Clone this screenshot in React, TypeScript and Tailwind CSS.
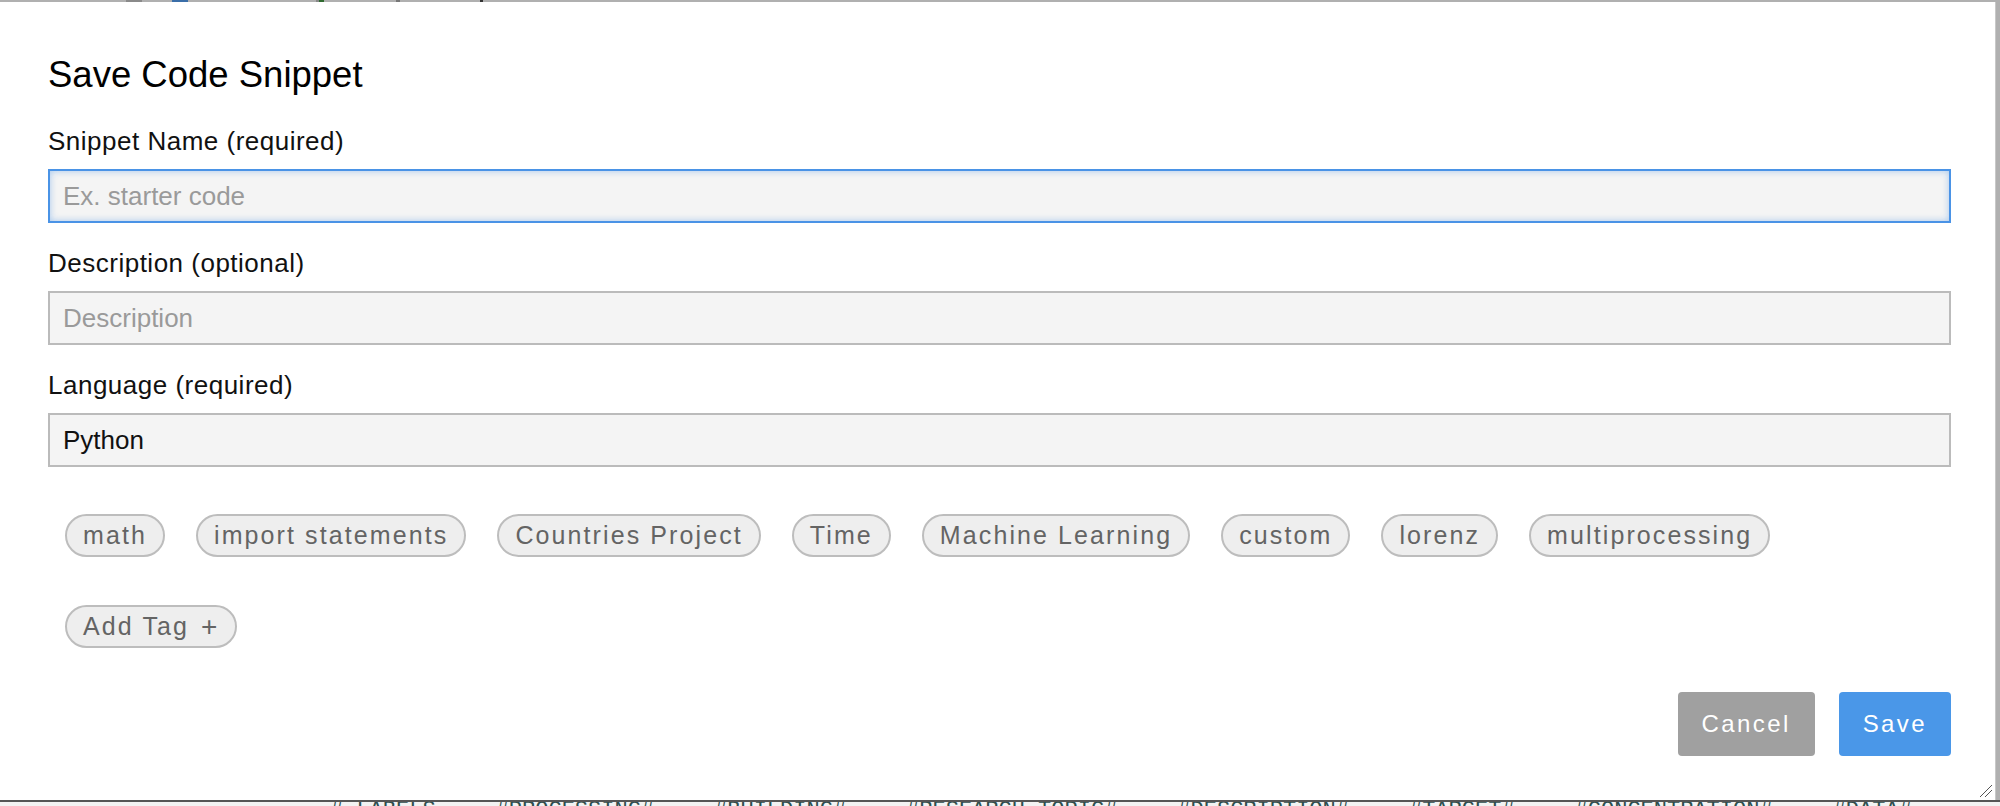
import React from "react";

const tags = [
  "math",
  "import statements",
  "Countries Project",
  "Time",
  "Machine Learning",
  "custom",
  "lorenz",
  "multiprocessing",
];

function Pill({ children }: { children: React.ReactNode }) {
  return (
    <div className="flex h-[43px] items-center rounded-full border-2 border-[#bdbdbd] bg-[#eeeeee] px-4 text-[25px] leading-none tracking-[2.1px] text-[#646464] whitespace-nowrap">
      {children}
    </div>
  );
}

function Field({
  label,
  placeholder,
  value,
  focused,
}: {
  label: string;
  placeholder?: string;
  value?: string;
  focused?: boolean;
}) {
  return (
    <div className="flex flex-col">
      <div className="mb-[16px] h-[24px] text-[26px] leading-[24px] tracking-[0.5px] text-[#111]">
        {label}
      </div>
      <div
        className={
          focused
            ? "flex h-[54px] items-center border-2 border-[#4a93e6] bg-[#f4f4f4] px-[13px] shadow-[inset_0_0_7px_rgba(74,147,230,0.45)]"
            : "flex h-[54px] items-center border-2 border-[#bbbbbb] bg-[#f4f4f4] px-[13px]"
        }
      >
        {value ? (
          <span className="text-[26px] leading-none text-[#111]">{value}</span>
        ) : (
          <span className="text-[26px] leading-none text-[#9a9a9a]">{placeholder}</span>
        )}
      </div>
    </div>
  );
}

export default function App() {
  return (
    <div
      className="h-[806px] w-[2000px] overflow-hidden bg-[#e6e6e6]"
      style={{ fontFamily: '"Liberation Sans", Arial, sans-serif' }}
    >
      {/* background strip at top */}
      <div className="flex h-[2px] bg-[#b0b0b0]">
        <div className="ml-[126px] w-[16px] bg-[#8a8a8a]" />
        <div className="ml-[30px] w-[16px] bg-[#3a6ea8]" />
        <div className="ml-[128px] w-[3px] bg-[#888]" />
        <div className="w-[5px] bg-[#2f6a2f]" />
        <div className="ml-[72px] w-[4px] bg-[#777]" />
        <div className="ml-[80px] w-[3px] bg-[#333]" />
      </div>

      <div className="flex">
        <div className="relative flex h-[798px] w-[1996px] flex-col border-r border-[#c8c8c8] bg-white pl-[48px] pr-[44px] pt-[51px]">
          <h1 className="mb-[32px] h-[44px] text-[36.5px] font-normal leading-[44px] text-black">
            Save Code Snippet
          </h1>

          <div className="flex flex-col gap-[28px]">
            <Field label="Snippet Name (required)" placeholder="Ex. starter code" focused />
            <Field label="Description (optional)" placeholder="Description" />
            <Field label="Language (required)" value="Python" />
          </div>

          <div className="ml-[17px] mt-[47px] flex gap-x-[31px]">
            {tags.map((t) => (
              <Pill key={t}>{t}</Pill>
            ))}
          </div>

          <div className="ml-[17px] mt-[48px] flex">
            <Pill>
              Add Tag<span className="ml-[12px] text-[28px] font-light">+</span>
            </Pill>
          </div>

          <div className="mt-[44px] flex justify-end gap-[24px]">
            <button className="h-[64px] rounded-[4px] bg-[#a0a0a0] px-6 text-[24px] leading-none tracking-[2.4px] text-white">
              Cancel
            </button>
            <button className="h-[64px] rounded-[4px] bg-[#4a97e8] px-6 text-[24px] leading-none tracking-[2.4px] text-white">
              Save
            </button>
          </div>

          <svg
            className="absolute bottom-[2px] right-[2px]"
            width="14"
            height="14"
            viewBox="0 0 14 14"
          >
            <line x1="1" y1="13" x2="13" y2="1" stroke="#555" strokeWidth="1" />
            <line x1="6" y1="13" x2="13" y2="6" stroke="#555" strokeWidth="1" />
          </svg>
        </div>
        <div className="w-[4px] bg-[#b0b0b0]" />
      </div>

      {/* background content peeking under the dialog */}
      <div className="h-[6px] overflow-hidden border-t-2 border-[#555] bg-[#f2f2f2]">
        <div
          className="-mt-[2px] flex gap-[60px] pl-[330px] text-[22px] leading-[22px] text-[#2f4f4f] whitespace-nowrap"
          style={{ fontFamily: '"Liberation Mono", monospace' }}
        >
          <span># LABELS</span>
          <span>#PROCESSING#</span>
          <span>#BUILDING#</span>
          <span>#RESEARCH TOPIC#</span>
          <span>#DESCRIPTION#</span>
          <span>#TARGET#</span>
          <span>#CONCENTRATION#</span>
          <span>#DATA#</span>
        </div>
      </div>
    </div>
  );
}
